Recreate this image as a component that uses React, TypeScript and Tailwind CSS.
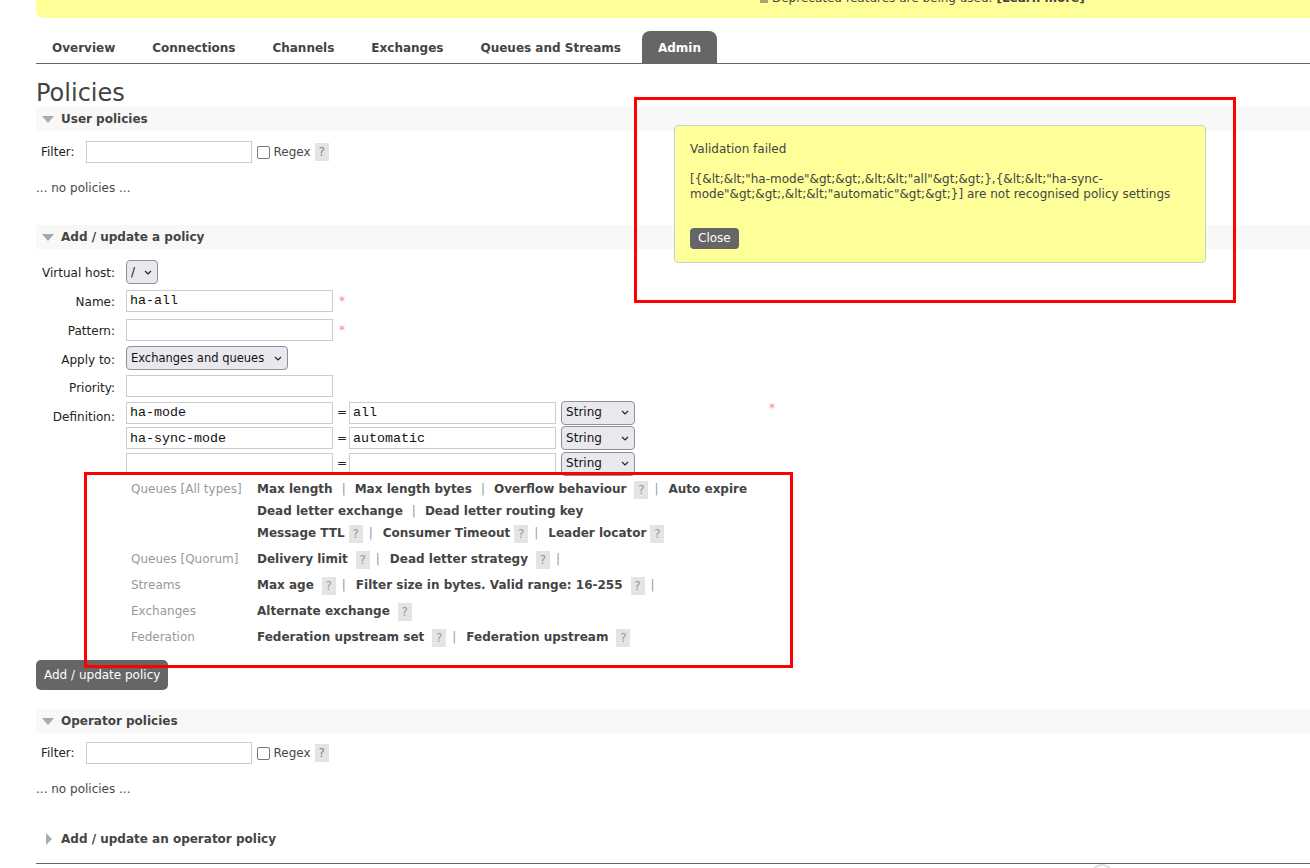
import React from "react";

function Help({ tight = false }: { tight?: boolean }) {
  return (
    <span
      className={`inline-flex h-[18px] w-[14px] items-center justify-center bg-[#e4e4e4] align-middle text-[12px] font-normal text-[#999] ${
        tight ? "ml-[4px]" : "ml-[8px]"
      }`}
    >
      ?
    </span>
  );
}

function Sep({ after = false }: { after?: boolean }) {
  return (
    <span className={`font-normal text-[#999] ${after ? "ml-[6px] mr-[10px]" : "mx-[9px]"}`}>|</span>
  );
}

function Chevron() {
  return (
    <svg width="8" height="5" viewBox="0 0 8 5" className="flex-none">
      <path d="M1 1l3 3 3-3" fill="none" stroke="#222" strokeWidth="1.2" />
    </svg>
  );
}

function FakeSelect({ value, width, small = false }: { value: string; width: string; small?: boolean }) {
  return (
    <div
      className={`flex h-[24px] ${width} items-center justify-between rounded-[4px] border border-[#8f8f9d] bg-[#e9e9ed] pl-[4px] pr-[5px] ${
        small ? "text-[11.5px]" : "text-[12px]"
      } text-[#111]`}
    >
      <span>{value}</span>
      <Chevron />
    </div>
  );
}

function SectionHeader({ title, open = true }: { title: string; open?: boolean }) {
  return (
    <div className={`flex h-[24px] items-center ${open ? "bg-[#f8f8f8]" : ""}`}>
      {open ? (
        <svg width="12" height="7" viewBox="0 0 12 7" className="ml-[6px] flex-none">
          <path d="M0 0h12L6 7z" fill="#aaa" />
        </svg>
      ) : (
        <svg width="6" height="12" viewBox="0 0 6 12" className="ml-[10px] flex-none">
          <path d="M0 0l6 6-6 6z" fill="#aaa" />
        </svg>
      )}
      <span className={`${open ? "ml-[7px]" : "ml-[9px]"} pt-[1px] font-bold text-[#444]`}>{title}</span>
    </div>
  );
}

function FilterRow() {
  return (
    <div className="flex h-[22px] items-center">
      <span className="ml-[5px] text-[#222]">Filter:</span>
      <div className="ml-[11px] h-[22px] w-[166px] border border-[#ccc] bg-white" />
      <span className="ml-[5px] h-[13px] w-[13px] rounded-[2px] border border-[#767676] bg-white" />
      <span className="ml-[4px]">Regex</span>
      <span className="ml-[4px] inline-flex h-[18px] w-[14px] items-center justify-center bg-[#e4e4e4] text-[#888]">?</span>
    </div>
  );
}

function TextInput({ value = "", w = "w-[207px]" }: { value?: string; w?: string }) {
  return (
    <div
      className={`flex h-[22px] ${w} items-center border border-[#ccc] bg-white pl-[3px] font-['Liberation_Mono',monospace] text-[13.33px] text-[#111]`}
    >
      {value}
    </div>
  );
}

function FormRow({ label, h, children }: { label: string; h: string; children: React.ReactNode }) {
  return (
    <div className={`flex ${h} items-center`}>
      <div className="w-[79px] pt-[4px] text-right text-[#222]">{label}</div>
      <div className="ml-[11px] flex items-center">{children}</div>
    </div>
  );
}

function Star({ className = "" }: { className?: string }) {
  return <span className={`self-start text-[12px] text-[#f88] ${className}`}>*</span>;
}

export default function App() {
  return (
    <div className="relative h-[868px] overflow-hidden bg-white font-['DejaVu_Sans',sans-serif] text-[12px] leading-[15px] text-[#484848]">
      <div className="pl-[36px]">
        {/* deprecation banner, scrolled mostly out of view */}
        <div className="h-[18px] overflow-hidden rounded-bl-[8px] bg-[#ffff99]">
          <div className="-mt-[9px] flex items-center pl-[724px] text-[#444]">
            <span className="mr-[4px] inline-block h-[8px] w-[8px] bg-[#a8a870]" />
            Deprecated features are being used. <b className="ml-[4px]">[Learn more]</b>
          </div>
        </div>

        {/* tabs */}
        <div className="mt-[13px] flex h-[33px] border-b border-[#666]">
          {["Overview", "Connections", "Channels", "Exchanges", "Queues and Streams"].map((t) => (
            <div key={t} className="mr-[5px] flex h-[32px] items-center px-[16px] pt-[2px] font-bold text-[#444]">
              {t}
            </div>
          ))}
          <div className="flex h-[32px] items-center rounded-t-[8px] bg-[#666] px-[16px] pt-[2px] font-bold text-white">
            Admin
          </div>
        </div>

        <h1 className="pt-[16px] text-[24px] leading-[27px] font-normal text-[#444]">Policies</h1>

        <SectionHeader title="User policies" />
        <div className="mt-[10px]">
          <FilterRow />
        </div>
        <p className="mt-[18px]">... no policies ...</p>

        <div className="mt-[29px]">
          <SectionHeader title="Add / update a policy" />
        </div>

        <div className="mt-[7px]">
          <FormRow label="Virtual host:" h="h-[30px]">
            <div className="mt-[2px]">
              <FakeSelect value="/" width="w-[32px]" />
            </div>
          </FormRow>
          <FormRow label="Name:" h="h-[29px]">
            <TextInput value="ha-all" />
            <Star className="ml-[6px] mt-[4px]" />
          </FormRow>
          <FormRow label="Pattern:" h="h-[29px]">
            <TextInput />
            <Star className="ml-[6px] mt-[4px]" />
          </FormRow>
          <FormRow label="Apply to:" h="h-[28px]">
            <FakeSelect value="Exchanges and queues" width="w-[162px]" small />
          </FormRow>
          <FormRow label="Priority:" h="h-[28px]">
            <TextInput />
          </FormRow>

          <div className="flex">
            <div className="w-[79px] pt-[10px] text-right text-[#222]">Definition:</div>
            <div className="ml-[11px] flex flex-col">
              {[
                ["ha-mode", "all", "h-[25px]"],
                ["ha-sync-mode", "automatic", "h-[26px]"],
                ["", "", "h-[25px]"],
              ].map(([k, v, h], i) => (
                <div key={i} className={`flex ${h} items-center`}>
                  <TextInput value={k} />
                  <span className="ml-[4px] mr-[2px] text-[#222]">=</span>
                  <TextInput value={v} />
                  <div className="ml-[5px]">
                    <FakeSelect value="String" width="w-[74px]" />
                  </div>
                  {i === 0 && <Star className="ml-[134px] mt-[1px]" />}
                </div>
              ))}
            </div>
          </div>

          {/* help table */}
          <div className="mt-[2px] pl-[95px] leading-[22px]">
            <div className="mb-[4px] flex">
              <div className="w-[126px] text-[#999]">Queues [All types]</div>
              <div className="font-bold text-[#444]">
                <div>
                  Max length<Sep />Max length bytes<Sep />Overflow behaviour<Help />
                  <Sep after />Auto expire
                </div>
                <div>
                  Dead letter exchange<Sep />Dead letter routing key
                </div>
                <div>
                  Message TTL<Help tight />
                  <Sep after />Consumer Timeout<Help tight />
                  <Sep after />Leader locator<Help tight />
                </div>
              </div>
            </div>
            <div className="mb-[4px] flex">
              <div className="w-[126px] text-[#999]">Queues [Quorum]</div>
              <div className="font-bold text-[#444]">
                Delivery limit<Help />
                <Sep after />Dead letter strategy<Help />
                <Sep after />
              </div>
            </div>
            <div className="mb-[4px] flex">
              <div className="w-[126px] text-[#999]">Streams</div>
              <div className="font-bold text-[#444]">
                Max age<Help />
                <Sep after />Filter size in bytes. Valid range: 16-255<Help />
                <Sep after />
              </div>
            </div>
            <div className="mb-[4px] flex">
              <div className="w-[126px] text-[#999]">Exchanges</div>
              <div className="font-bold text-[#444]">
                Alternate exchange<Help />
              </div>
            </div>
            <div className="flex">
              <div className="w-[126px] text-[#999]">Federation</div>
              <div className="font-bold text-[#444]">
                Federation upstream set<Help />
                <Sep after />Federation upstream<Help />
              </div>
            </div>
          </div>

          <button className="mt-[12px] h-[30px] rounded-[5px] bg-[#666] px-[8px] pt-[1px] text-[12px] text-white">
            Add / update policy
          </button>
        </div>

        <div className="mt-[19px]">
          <SectionHeader title="Operator policies" />
        </div>
        <div className="mt-[9px]">
          <FilterRow />
        </div>
        <p className="mt-[18px]">... no policies ...</p>

        <div className="mt-[30px]">
          <SectionHeader title="Add / update an operator policy" open={false} />
        </div>

        <div className="mt-[12px] border-t border-[#666]">
          <div className="ml-[1054px] h-[24px] w-[24px] rounded-full border-2 border-[#ddd]" />
        </div>
      </div>

      {/* validation popup */}
      <div className="absolute left-[674px] top-[125px] h-[138px] w-[532px] rounded-[4px] border border-[#ccc] bg-[#ffff99] px-[15px] pt-[16px] text-[#444]">
        <p>Validation failed</p>
        <p className="mt-[15px]">
          [{"{"}&amp;lt;&amp;lt;"ha-mode"&amp;gt;&amp;gt;,&amp;lt;&amp;lt;"all"&amp;gt;&amp;gt;{"}"},{"{"}&amp;lt;&amp;lt;"ha-sync-
          <br />
          mode"&amp;gt;&amp;gt;,&amp;lt;&amp;lt;"automatic"&amp;gt;&amp;gt;{"}"}] are not recognised policy settings
        </p>
        <button className="mt-[26px] h-[21px] rounded-[4px] bg-[#666] px-[8px] text-[12px] text-white">Close</button>
      </div>

      {/* red annotation boxes */}
      <div className="pointer-events-none absolute left-[634px] top-[97px] h-[206px] w-[602px] border-[3px] border-[#ff0000]" />
      <div className="pointer-events-none absolute left-[84px] top-[472px] h-[196px] w-[709px] border-[3px] border-[#ff0000]" />
    </div>
  );
}
